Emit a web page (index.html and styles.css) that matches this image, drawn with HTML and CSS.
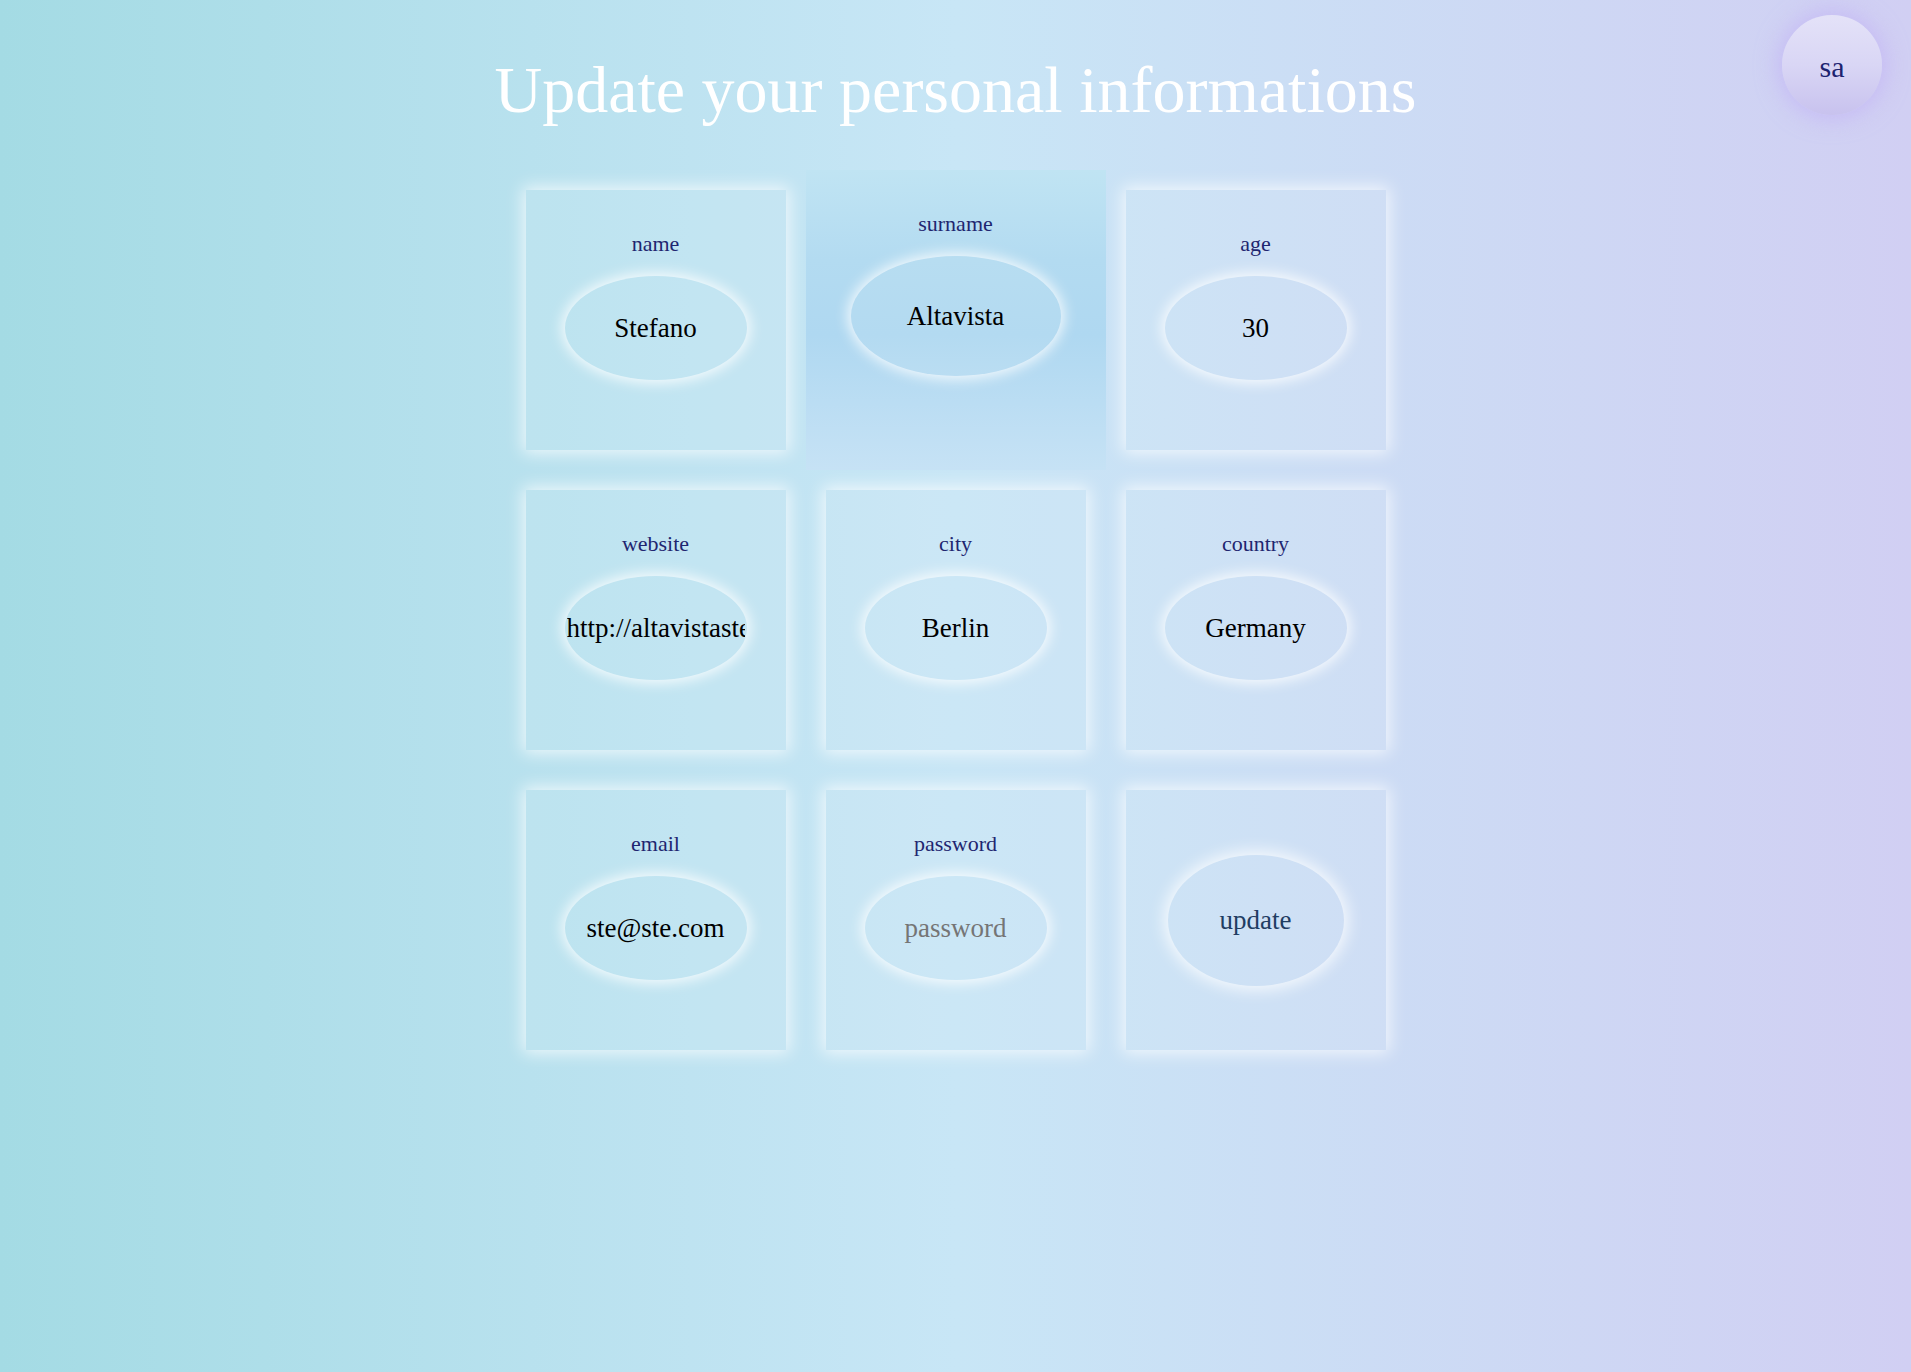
FILE: index.html
```html
<!DOCTYPE html>
<html lang="en">
<head>
<meta charset="utf-8">
<title>Update your personal informations</title>
<link rel="stylesheet" href="styles.css">
</head>
<body>
  <div class="avatar">sa</div>
  <h1 class="title">Update your personal informations</h1>
  <form class="grid">
    <div class="card">
      <label class="label">name</label>
      <input class="field" type="text" value="Stefano">
    </div>
    <div class="card card--active">
      <label class="label">surname</label>
      <input class="field" type="text" value="Altavista">
    </div>
    <div class="card">
      <label class="label">age</label>
      <input class="field" type="text" value="30">
    </div>
    <div class="card">
      <label class="label">website</label>
      <input class="field" type="text" value="http://altavistastefano.com">
    </div>
    <div class="card">
      <label class="label">city</label>
      <input class="field" type="text" value="Berlin">
    </div>
    <div class="card">
      <label class="label">country</label>
      <input class="field" type="text" value="Germany">
    </div>
    <div class="card">
      <label class="label">email</label>
      <input class="field" type="text" value="ste@ste.com">
    </div>
    <div class="card">
      <label class="label">password</label>
      <input class="field" type="password" placeholder="password">
    </div>
    <div class="card card--action">
      <button class="btn" type="button">update</button>
    </div>
  </form>
</body>
</html>
```

FILE: styles.css
```css
html, body {
  margin: 0;
  padding: 0;
}

body {
  min-height: 100vh;
  font-family: "Liberation Serif", "Times New Roman", serif;
  background: linear-gradient(to right, #a4dbe4 0%, #c8e6f6 50%, #d1cff3 100%);
  position: relative;
}

.avatar {
  position: absolute;
  top: 15px;
  right: 29px;
  width: 100px;
  height: 100px;
  border-radius: 50%;
  background: linear-gradient(to bottom, #e4e2f8 0%, #d9d6f5 50%, #c8c2ee 100%);
  box-shadow: 0 0 22px 4px rgba(190, 170, 245, 0.55);
  display: flex;
  align-items: center;
  justify-content: center;
  color: #1d2370;
  font-size: 30px;
  line-height: 1;
  padding-top: 4px;
  box-sizing: border-box;
}

.title {
  margin: 52px 0 0;
  text-align: center;
  color: #ffffff;
  font-weight: normal;
  font-size: 66px;
  line-height: 76px;
}

.grid {
  display: grid;
  grid-template-columns: repeat(3, 260px);
  grid-auto-rows: 260px;
  gap: 40px;
  justify-content: center;
  margin: 62px 0 0;
}

.card {
  display: flex;
  flex-direction: column;
  align-items: center;
  padding-top: 41px;
  box-sizing: border-box;
  background: rgba(255, 255, 255, 0.07);
  box-shadow: 0 0 16px 3px rgba(255, 255, 255, 0.75);
}

.card--active {
  margin: -20px;
  position: relative;
  z-index: 1;
  box-shadow: none;
  background: linear-gradient(to bottom, #c0e4f3 0%, #b3dbf1 30%, #afd8f1 55%, #c6e2f5 100%);
}

.card--action {
  padding-top: 0;
  justify-content: center;
}

.label {
  font-size: 22px;
  line-height: 26px;
  color: #1f2670;
  margin-bottom: 19px;
}

.field {
  width: 182px;
  height: 104px;
  box-sizing: border-box;
  padding: 0 2px;
  border: none;
  border-radius: 50%;
  background: transparent;
  box-shadow: 0 0 14px 3px rgba(255, 255, 255, 0.85);
  font-family: "Liberation Serif", "Times New Roman", serif;
  font-size: 27px;
  color: #000000;
  text-align: center;
  outline: none;
}

.card--active .field {
  width: 210px;
  height: 120px;
  background: rgba(255, 255, 255, 0.06);
}

.field::placeholder {
  color: #757575;
}

.btn {
  width: 176px;
  height: 131px;
  border: none;
  border-radius: 50%;
  background: transparent;
  box-shadow: 0 0 16px 4px rgba(255, 255, 255, 0.8);
  font-family: "Liberation Serif", "Times New Roman", serif;
  font-size: 27px;
  color: #1f3d63;
  cursor: pointer;
}
```
